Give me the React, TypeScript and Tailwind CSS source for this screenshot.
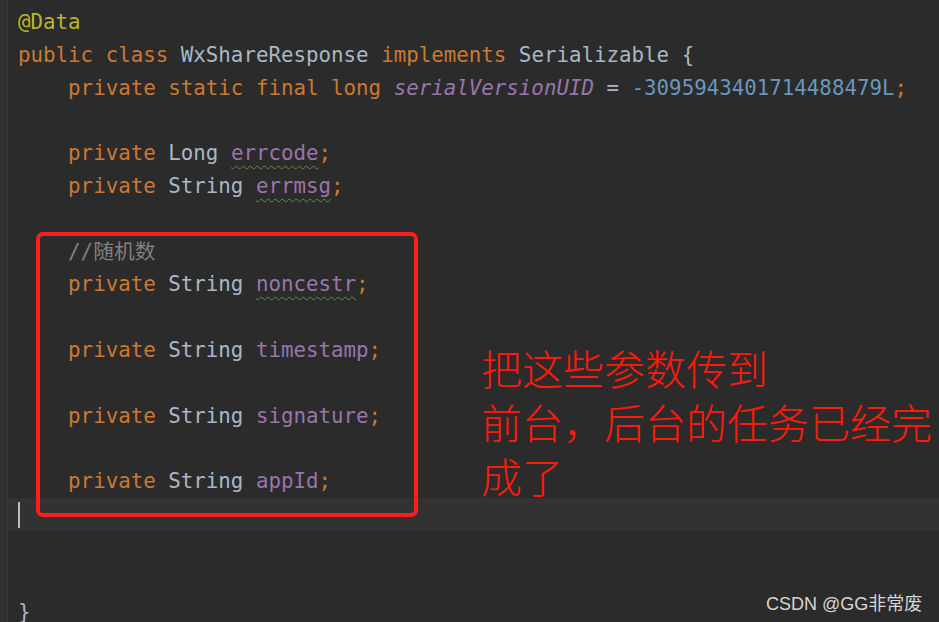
const KW = "text-[#cc7832]";
const TY = "text-[#a9b7c6]";
const FD = "text-[#9876aa]";
const WAVY = "underline decoration-wavy decoration-[#5f8c4f] underline-offset-[5px] decoration-1";

function Line({ children, current }: { children?: React.ReactNode; current?: boolean }) {
  return (
    <div className={`h-[32.8px] leading-[32.8px] whitespace-pre pl-[10px] ${current ? "bg-[#323232]" : ""}`}>
      {children}
    </div>
  );
}

function Field({ type, name, wavy }: { type: string; name: string; wavy?: boolean }) {
  return (
    <>
      {"    "}
      <span className={KW}>private </span>
      <span className={TY}>{type} </span>
      <span className={`${FD} ${wavy ? WAVY : ""}`}>{name}</span>
      <span className={KW}>;</span>
    </>
  );
}

export default function App() {
  return (
    <div className="relative flex h-[622px] w-[939px] overflow-hidden bg-[#2b2b2b]">
      <div className="w-[8px] shrink-0 border-r border-[#3a3a3a] bg-[#303030]" />
      <div
        className="flex-1 pt-[6px] text-[20.8px] text-[#a9b7c6]"
        style={{ fontFamily: '"DejaVu Sans Mono", "Noto Sans CJK SC", monospace' }}
      >
        <Line>
          <span className="text-[#bbb529]">@Data</span>
        </Line>
        <Line>
          <span className={KW}>public class </span>
          <span className={TY}>WxShareResponse </span>
          <span className={KW}>implements </span>
          <span className={TY}>Serializable {"{"}</span>
        </Line>
        <Line>
          {"    "}
          <span className={KW}>private static final long </span>
          <span className={`${FD} italic`}>serialVersionUID</span>
          <span className={TY}> = </span>
          <span className="text-[#6897bb]">-3095943401714488479L</span>
          <span className={KW}>;</span>
        </Line>
        <Line />
        <Line>
          <Field type="Long" name="errcode" wavy />
        </Line>
        <Line>
          <Field type="String" name="errmsg" wavy />
        </Line>
        <Line />
        <Line>
          {"    "}
          <span className="text-[#808080]">//随机数</span>
        </Line>
        <Line>
          <Field type="String" name="noncestr" wavy />
        </Line>
        <Line />
        <Line>
          <Field type="String" name="timestamp" />
        </Line>
        <Line />
        <Line>
          <Field type="String" name="signature" />
        </Line>
        <Line />
        <Line>
          <Field type="String" name="appId" />
        </Line>
        <Line current>
          <span className="inline-block h-[26px] w-[2px] translate-y-[4px] bg-[#bbbbbb] align-top" />
        </Line>
        <Line />
        <Line />
        <Line>
          <span className={TY}>{"}"}</span>
        </Line>
      </div>

      {/* annotation overlay */}
      <div className="absolute left-[36px] top-[232px] h-[285px] w-[382px] rounded-[7px] border-[4px] border-[#ff1e1e]" />
      <div
        className="absolute left-[481px] top-[340px] flex flex-col whitespace-nowrap text-[41px] font-light text-[#ff1a0a]"
        style={{ fontFamily: '"Noto Sans CJK SC", sans-serif' }}
      >
        <div className="h-[54px] leading-[54px]">把这些参数传到</div>
        <div className="h-[54px] leading-[54px]">前台，后台的任务已经完</div>
        <div className="h-[54px] leading-[54px]">成了</div>
      </div>
      <div
        className="absolute left-[766px] top-[591px] whitespace-nowrap text-[18px] text-[#d6d6d6]"
        style={{ fontFamily: '"Liberation Sans", "Noto Sans CJK SC", sans-serif' }}
      >
        CSDN @GG非常废
      </div>
    </div>
  );
}
